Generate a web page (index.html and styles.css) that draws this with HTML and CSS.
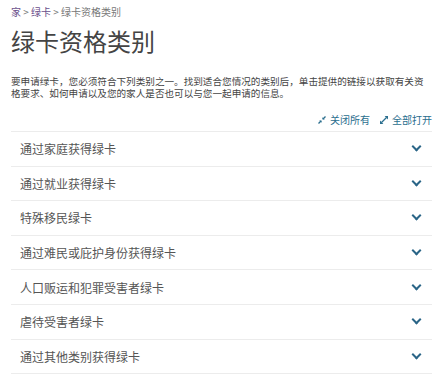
FILE: index.html
```html
<!DOCTYPE html>
<html lang="zh-CN">
<head>
    <meta charset="UTF-8">
    <meta name="viewport" content="width=device-width, initial-scale=1.0">
    <title>绿卡资格类别</title>
    <link rel="stylesheet" href="styles.css">
</head>
<body>
    <div class="page">
        <div class="breadcrumb">
            <a href="#">家</a> &gt; <a href="#">绿卡</a> &gt; <span>绿卡资格类别</span>
        </div>
        <h1 class="page-title">绿卡资格类别</h1>
        <p class="intro">要申请绿卡，您必须符合下列类别之一。找到适合您情况的类别后，单击提供的链接以获取有关资格要求、如何申请以及您的家人是否也可以与您一起申请的信息。</p>

        <div class="accordion-controls">
            <a href="#" class="toggle-link">
                <svg width="8" height="8" viewBox="0 0 8 8"><path d="M0.5 7.5 L3 5 M5 3 L7.5 0.5" stroke="#2a6e8e" stroke-width="1.4"/><path d="M1.2 4.4 L3.6 4.4 L3.6 6.8 Z M4.4 1.2 L4.4 3.6 L6.8 3.6 Z" fill="#2a6e8e"/></svg>
                关闭所有
            </a>
            <a href="#" class="toggle-link">
                <svg width="8" height="8" viewBox="0 0 8 8"><path d="M1.5 6.5 L6.5 1.5" stroke="#2a6e8e" stroke-width="1.2"/><path d="M0 8 L0 4.6 L3.4 8 Z M8 0 L8 3.4 L4.6 0 Z" fill="#2a6e8e"/></svg>
                全部打开
            </a>
        </div>

        <ul class="accordion">
            <li class="accordion-item">通过家庭获得绿卡<span class="chevron"></span></li>
            <li class="accordion-item">通过就业获得绿卡<span class="chevron"></span></li>
            <li class="accordion-item">特殊移民绿卡<span class="chevron"></span></li>
            <li class="accordion-item">通过难民或庇护身份获得绿卡<span class="chevron"></span></li>
            <li class="accordion-item">人口贩运和犯罪受害者绿卡<span class="chevron"></span></li>
            <li class="accordion-item">虐待受害者绿卡<span class="chevron"></span></li>
            <li class="accordion-item">通过其他类别获得绿卡<span class="chevron"></span></li>
        </ul>
    </div>
</body>
</html>
```

FILE: styles.css
```css
body {
    font-family: "Noto Sans CJK SC", "Liberation Sans", sans-serif;
    background-color: #fff;
    color: #555;
    margin: 0;
    padding: 0;
}

/* Page wrapper */
.page {
    padding: 5px 10px 0 11px;
}

/* Breadcrumb */
.breadcrumb {
    font-size: 10px;
    line-height: 14px;
    color: #777;
}

.breadcrumb a {
    color: #6a4f8c;
    text-decoration: none;
}

/* Title */
.page-title {
    font-size: 24px;
    font-weight: normal;
    color: #444;
    margin: 6px 0 0;
    line-height: 32px;
}

/* Intro text */
.intro {
    font-size: 9.6px;
    line-height: 12px;
    color: #444;
    margin: 18px 0 0;
}

/* Expand / collapse links */
.accordion-controls {
    display: flex;
    justify-content: flex-end;
    gap: 10px;
    margin-top: 14px;
    font-size: 10px;
    line-height: 14px;
}

.toggle-link {
    color: #2a6e8e;
    text-decoration: none;
    display: flex;
    align-items: center;
    gap: 4px;
}

/* Accordion list */
.accordion {
    list-style: none;
    margin: 4px 0 0;
    padding: 0;
    border-top: 1px solid #ececec;
}

.accordion-item {
    display: flex;
    justify-content: space-between;
    align-items: center;
    height: 33.6px;
    padding: 0 12px 0 9px;
    border-bottom: 1px solid #ececec;
    font-size: 12px;
    color: #555;
}

.chevron {
    width: 5px;
    height: 5px;
    border-right: 2px solid #2a6587;
    border-bottom: 2px solid #2a6587;
    transform: rotate(45deg);
    margin-top: -4px;
}
```
